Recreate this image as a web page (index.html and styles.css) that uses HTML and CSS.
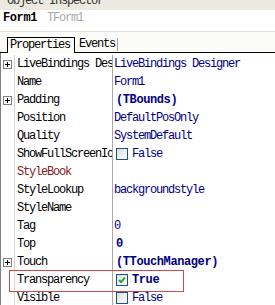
FILE: index.html
```html
<!DOCTYPE html>
<html lang="en">

<head>
    <meta charset="UTF-8" />
    <meta name="viewport" content="width=device-width, initial-scale=1.0" />
    <title>Object Inspector</title>
    <link rel="stylesheet" href="styles.css">
</head>

<body>
    <div class="inspector">
        <div class="caption"><span>Object Inspector</span></div>
        <div class="selector"><b>Form1</b><span class="type">TForm1</span></div>

        <div class="tabs">
            <div class="tab active">Properties</div>
            <div class="tab">Events</div>
        </div>

        <div class="grid">
            <div class="row">
                <div class="btn"><span class="plus"></span></div>
                <div class="name">LiveBindings Designer</div>
                <div class="value">LiveBindings Designer</div>
            </div>
            <div class="row">
                <div class="btn"></div>
                <div class="name">Name</div>
                <div class="value">Form1</div>
            </div>
            <div class="row">
                <div class="btn"><span class="plus"></span></div>
                <div class="name">Padding</div>
                <div class="value bold">(TBounds)</div>
            </div>
            <div class="row">
                <div class="btn"></div>
                <div class="name">Position</div>
                <div class="value">DefaultPosOnly</div>
            </div>
            <div class="row">
                <div class="btn"></div>
                <div class="name">Quality</div>
                <div class="value">SystemDefault</div>
            </div>
            <div class="row">
                <div class="btn"></div>
                <div class="name">ShowFullScreenIcon</div>
                <div class="value"><span class="check"></span>False</div>
            </div>
            <div class="row">
                <div class="btn"></div>
                <div class="name link">StyleBook</div>
                <div class="value"></div>
            </div>
            <div class="row">
                <div class="btn"></div>
                <div class="name">StyleLookup</div>
                <div class="value">backgroundstyle</div>
            </div>
            <div class="row">
                <div class="btn"></div>
                <div class="name">StyleName</div>
                <div class="value"></div>
            </div>
            <div class="row">
                <div class="btn"></div>
                <div class="name">Tag</div>
                <div class="value">0</div>
            </div>
            <div class="row">
                <div class="btn"></div>
                <div class="name">Top</div>
                <div class="value bold">0</div>
            </div>
            <div class="row">
                <div class="btn"><span class="plus"></span></div>
                <div class="name">Touch</div>
                <div class="value bold">(TTouchManager)</div>
            </div>
            <div class="row">
                <div class="btn"></div>
                <div class="name">Transparency</div>
                <div class="value bold"><span class="check">
                        <svg width="8" height="8" viewBox="0 0 8 8">
                            <path d="M1 4 L3 6.2 L7 1.5" fill="none" stroke="#21a121" stroke-width="1.8" />
                        </svg>
                    </span>True</div>
            </div>
            <div class="row">
                <div class="btn"></div>
                <div class="name">Visible</div>
                <div class="value"><span class="check"></span>False</div>
            </div>
        </div>

        <div class="mark"></div>
    </div>
</body>

</html>
```

FILE: styles.css
```css
:root {
    --navy: #000080;
    --line: #c4c4bc;
    --face: #fbfbf7;
}

* {
    box-sizing: border-box;
}

body {
    margin: 0;
    background: #ffffff;
    font-family: 'Liberation Mono', monospace;
    font-size: 12px;
    letter-spacing: -1.2px;
    color: #000000;
    overflow: hidden;
}

.inspector {
    position: relative;
    width: 275px;
}

.caption {
    height: 10px;
    overflow: hidden;
    background: #ebe9e0;
    padding-left: 7px;
    color: #333333;
}

.caption span {
    display: block;
    margin-top: -6px;
    line-height: 14px;
}

.selector {
    height: 21px;
    line-height: 16px;
    padding-left: 3px;
}

.selector b {
    letter-spacing: -0.4px;
}

.selector .type {
    margin-left: 10px;
    color: #a8a8a8;
}

.tabs {
    height: 22px;
    display: flex;
    align-items: flex-end;
    padding-left: 7px;
    background: var(--face);
    border-top: 1px solid #e2e0d6;
    border-bottom: 1px solid #000000;
}

.tab {
    line-height: 13px;
    padding: 0 2px 0 4px;
    margin-bottom: 1px;
    border-right: 1px solid #a0a0a0;
}

.tab.active {
    height: 16px;
    line-height: 15px;
    padding: 0 4px 0 2px;
    margin-bottom: -1px;
    border: 1px solid #000000;
    border-bottom: none;
    background: var(--face);
}

.grid {
    padding-top: 2px;
    border-left: 1px solid #808080;
}

.row {
    display: grid;
    grid-template-columns: 14px 98px 1fr;
    height: 18px;
    line-height: 18px;
}

.btn {
    border-right: 1px solid #d4d4d4;
    display: flex;
    align-items: center;
}

.plus {
    position: relative;
    width: 9px;
    height: 9px;
    margin-left: 2px;
    border: 1px solid #808080;
    background: #ffffff;
}

.plus::before,
.plus::after {
    content: '';
    position: absolute;
    background: #000000;
}

.plus::before {
    left: 1px;
    top: 3px;
    width: 5px;
    height: 1px;
}

.plus::after {
    left: 3px;
    top: 1px;
    width: 1px;
    height: 5px;
}

.name {
    padding-left: 2px;
    border-right: 1px solid #a8a8a8;
    white-space: nowrap;
    overflow: hidden;
}

.name.link {
    color: #8b1a1a;
}

.value {
    padding-left: 1px;
    color: var(--navy);
    white-space: nowrap;
    overflow: hidden;
    display: flex;
    align-items: center;
}

.value.bold {
    font-weight: bold;
    letter-spacing: -0.4px;
    padding-left: 3px;
}

.check {
    width: 12px;
    height: 12px;
    margin: 0 4px 0 2px;
    border: 1px solid #1c5180;
    background: linear-gradient(135deg, #dcdcd5, #ffffff);
    display: flex;
    align-items: center;
    justify-content: center;
}

.value.bold .check {
    margin-left: 0;
}

.mark {
    position: absolute;
    left: 9px;
    top: 270px;
    width: 175px;
    height: 22px;
    border: 1px solid #cc4a4a;
}
```
